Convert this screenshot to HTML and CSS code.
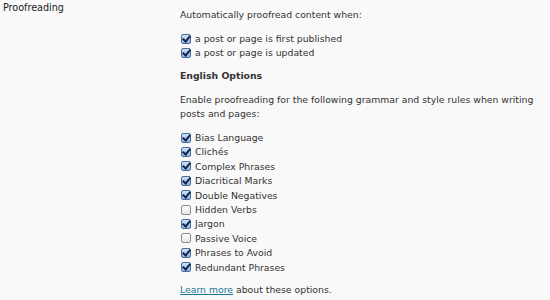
FILE: index.html
```html
<!DOCTYPE html>
<html lang="en">
<head>
  <meta charset="UTF-8">
  <title>Proofreading Settings</title>
  <link rel="stylesheet" href="styles.css">
</head>
<body>

  <div class="setting-row">
    <div class="setting-label">Proofreading</div>

    <div class="setting-field">
      <p class="intro">Automatically proofread content when:</p>
      <ul class="check-list">
        <li><span class="box checked"></span>a post or page is first published</li>
        <li><span class="box checked"></span>a post or page is updated</li>
      </ul>

      <h4>English Options</h4>

      <p class="intro">Enable proofreading for the following grammar and style rules when writing posts and pages:</p>
      <ul class="check-list">
        <li><span class="box checked"></span>Bias Language</li>
        <li><span class="box checked"></span>Clichés</li>
        <li><span class="box checked"></span>Complex Phrases</li>
        <li><span class="box checked"></span>Diacritical Marks</li>
        <li><span class="box checked"></span>Double Negatives</li>
        <li><span class="box"></span>Hidden Verbs</li>
        <li><span class="box checked"></span>Jargon</li>
        <li><span class="box"></span>Passive Voice</li>
        <li><span class="box checked"></span>Phrases to Avoid</li>
        <li><span class="box checked"></span>Redundant Phrases</li>
      </ul>

      <p class="outro"><a href="#">Learn more</a> about these options.</p>
    </div>
  </div>

</body>
</html>
```

FILE: styles.css
```css
:root {
  --body-color: #f9f9f9;
  --text-color: #333333;
  --label-color: #222222;
  --link-color: #21759b;
}

body {
  margin: 0;
  padding: 0;
  background-color: var(--body-color);
  color: var(--text-color);
  font-family: 'DejaVu Sans', sans-serif;
  font-size: 9.3px;
}

.setting-row {
  display: flex;
  padding: 0 0 0 3px;
}

.setting-label {
  width: 177px;
  flex-shrink: 0;
  color: var(--label-color);
  font-size: 9.6px;
  line-height: 14px;
  padding-top: 1px;
}

.setting-field {
  width: 355px;
  padding-top: 8px;
}

.setting-field p {
  margin: 0;
  line-height: 14.4px;
}

.setting-field h4 {
  margin: 0 0 9px;
  line-height: 14.4px;
  font-size: 9.3px;
  font-weight: bold;
}

.check-list {
  list-style: none;
  margin: 9px 0 9px;
  padding: 0;
}

.check-list li {
  display: flex;
  align-items: center;
  height: 14.4px;
}

/* Aqua style checkboxes */
.box {
  width: 8px;
  height: 8px;
  margin: 0 4px 0 1px;
  border: 1px solid #8d8d8d;
  border-radius: 2px;
  background: linear-gradient(#ffffff, #e6e6e6);
  position: relative;
}

.box.checked {
  border-color: #4a6d9c;
  background: linear-gradient(#cfe2f7, #8db6e6);
}

.box.checked::after {
  content: "";
  position: absolute;
  left: 2px;
  top: -1px;
  width: 3px;
  height: 6px;
  border-right: 2px solid #16244a;
  border-bottom: 2px solid #16244a;
  transform: rotate(40deg);
}

.outro {
  margin-top: 6px;
}

.outro a {
  color: var(--link-color);
  text-decoration: underline;
}
```
